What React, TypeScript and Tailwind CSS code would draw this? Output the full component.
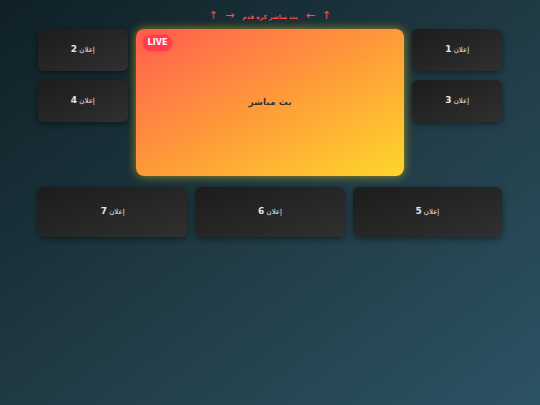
export default function App() {
  const ad = (n: number, cls: string) => (
    <div
      className={`flex items-center justify-center rounded-md bg-gradient-to-br from-[#1c1c1c] to-[#303030] text-[7px] text-[#e6e6e6] shadow-[0_2px_6px_rgba(0,0,0,0.45)] ${cls}`}
    >
      <span>
        إعلان <b className="text-[9px]">{n}</b>
      </span>
    </div>
  );

  return (
    <div
      dir="rtl"
      className="h-[405px] w-[540px] overflow-hidden bg-gradient-to-br from-[#0f2027] via-[#203a43] to-[#2c5364] font-['DejaVu_Sans',sans-serif]"
    >
      <div className="flex h-[29px] items-center justify-center gap-[7px] pt-[3px] text-[6px] font-bold text-[#ff4b4b]">
        <span className="text-[11px] font-normal">↑</span>
        <span className="text-[11px] font-normal">←</span>
        <span className="mx-[1px]">بث مباشر كرة قدم</span>
        <span className="text-[11px] font-normal">→</span>
        <span className="text-[11px] font-normal">↑</span>
      </div>

      <div className="mx-[38px] grid grid-cols-[1fr_3fr_1fr] gap-x-[8px]">
        <div className="flex flex-col gap-[9px]">
          {ad(1, "h-[42px]")}
          {ad(3, "h-[42px]")}
        </div>
        <div className="relative flex h-[147px] items-center justify-center rounded-lg bg-gradient-to-br from-[#ff5a4e] via-[#fe9a38] to-[#fdd62a] shadow-[0_0_10px_rgba(255,215,0,0.55)]">
          <span className="text-[9px] font-bold text-[#333]">بث مباشر</span>
          <span
            dir="ltr"
            className="absolute left-[7px] top-[6px] rounded-full bg-[#ff3d4a] px-[5px] py-[4px] text-[8px] font-bold leading-none text-white shadow-[0_0_4px_rgba(255,60,70,0.6)]"
          >
            LIVE
          </span>
        </div>
        <div className="flex flex-col gap-[9px]">
          {ad(2, "h-[42px]")}
          {ad(4, "h-[42px]")}
        </div>
      </div>

      <div className="mx-[38px] mt-[11px] grid grid-cols-3 gap-x-[8px]">
        {ad(5, "h-[50px]")}
        {ad(6, "h-[50px]")}
        {ad(7, "h-[50px]")}
      </div>
    </div>
  );
}
